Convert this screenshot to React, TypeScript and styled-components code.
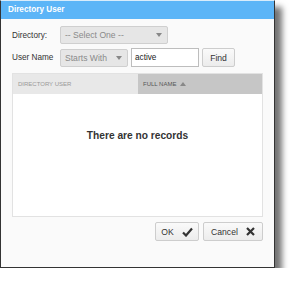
import styled, { createGlobalStyle } from "styled-components";

const Global = createGlobalStyle`
  html, body {
    margin: 0;
    padding: 0;
    background: #ffffff;
    font-family: Arial, "Liberation Sans", sans-serif;
  }
`;

const Dialog = styled.div`
  width: 273px;
  height: 266px;
  border: 1px solid #333;
  border-top-color: #d8ecfb;
  background: #fafafa;
  box-shadow: 7px 7px 6px rgba(0, 0, 0, 0.55);
  display: flex;
  flex-direction: column;
`;

const TitleBar = styled.div`
  height: 18px;
  background: #5cb5f7;
  color: #fff;
  font-weight: bold;
  font-size: 8.2px;
  line-height: 18px;
  padding-left: 7px;
`;

const Body = styled.div`
  padding: 7px 11px 0 11px;
  display: flex;
  flex-direction: column;
  flex: 1;
`;

const Row = styled.div`
  display: flex;
  align-items: center;
  gap: 3px;
  margin-bottom: 4px;
  white-space: nowrap;
`;

const Label = styled.span`
  width: 45px;
  font-size: 8.2px;
  color: #333;
`;

const Select = styled.div<{ w: number }>`
  width: ${(p) => p.w}px;
  height: 18px;
  box-sizing: border-box;
  border: 1px solid #cfcfcf;
  background: #e6e6e6;
  border-radius: 2px;
  color: #8a8a8a;
  font-size: 8.6px;
  display: flex;
  align-items: center;
  justify-content: space-between;
  padding: 0 5px 0 4px;
`;

const Arrow = styled.span`
  width: 0;
  height: 0;
  border-left: 3.5px solid transparent;
  border-right: 3.5px solid transparent;
  border-top: 4px solid #888;
`;

const TextBox = styled.div`
  width: 68px;
  height: 19px;
  box-sizing: border-box;
  border: 1px solid #bdbdbd;
  background: #fff;
  font-size: 8.2px;
  color: #222;
  padding: 0 3px;
  display: flex;
  align-items: center;
`;

const Button = styled.div<{ w: number }>`
  width: ${(p) => p.w}px;
  height: 19px;
  box-sizing: border-box;
  border: 1px solid #cdcdcd;
  border-radius: 2px;
  background: linear-gradient(#fafafa, #ececec);
  font-size: 8.6px;
  color: #333;
  display: flex;
  align-items: center;
  justify-content: center;
  gap: 8px;
`;

const Grid = styled.div`
  margin-top: 2px;
  width: 251px;
  height: 144px;
  box-sizing: border-box;
  border: 1px solid #e2e2e2;
  background: #fff;
  display: flex;
  flex-direction: column;
`;

const Header = styled.div`
  display: flex;
  height: 20px;
`;

const HeadCell = styled.div<{ w: number; dark?: boolean }>`
  width: ${(p) => p.w}px;
  background: ${(p) => (p.dark ? "#c6c6c6" : "#e8e8e8")};
  color: ${(p) => (p.dark ? "#555" : "#999")};
  font-size: 6px;
  text-transform: uppercase;
  display: flex;
  align-items: center;
  gap: 4px;
  padding-left: 5px;
  white-space: nowrap;
`;

const SortUp = styled.span`
  width: 0;
  height: 0;
  border-left: 3.5px solid transparent;
  border-right: 3.5px solid transparent;
  border-bottom: 4px solid #888;
`;

const Empty = styled.div`
  flex: 1;
  display: flex;
  justify-content: center;
  padding-top: 36px;
  font-weight: bold;
  font-size: 10.2px;
  color: #333;
`;

const Footer = styled.div`
  display: flex;
  justify-content: flex-end;
  gap: 4px;
  margin-top: 5px;
`;

const Check = () => (
  <svg width="11" height="10" viewBox="0 0 11 10">
    <path d="M1 5.5 L4 8.5 L10 1.5" fill="none" stroke="#333" strokeWidth="2.2" />
  </svg>
);

const Cross = () => (
  <svg width="9" height="9" viewBox="0 0 9 9">
    <path d="M1 1 L8 8 M8 1 L1 8" fill="none" stroke="#333" strokeWidth="2.2" />
  </svg>
);

export default function App() {
  return (
    <>
      <Global />
      <Dialog>
        <TitleBar>Directory User</TitleBar>
        <Body>
          <Row>
            <Label>Directory:</Label>
            <Select w={108}>
              <span>-- Select One --</span>
              <Arrow />
            </Select>
          </Row>
          <Row>
            <Label>User Name</Label>
            <Select w={68}>
              <span>Starts With</span>
              <Arrow />
            </Select>
            <TextBox>active</TextBox>
            <Button w={33}>Find</Button>
          </Row>
          <Grid>
            <Header>
              <HeadCell w={125}>Directory User</HeadCell>
              <HeadCell w={124} dark>
                Full Name <SortUp />
              </HeadCell>
            </Header>
            <Empty>There are no records</Empty>
          </Grid>
          <Footer>
            <Button w={44}>
              OK <Check />
            </Button>
            <Button w={60}>
              Cancel <Cross />
            </Button>
          </Footer>
        </Body>
      </Dialog>
    </>
  );
}
